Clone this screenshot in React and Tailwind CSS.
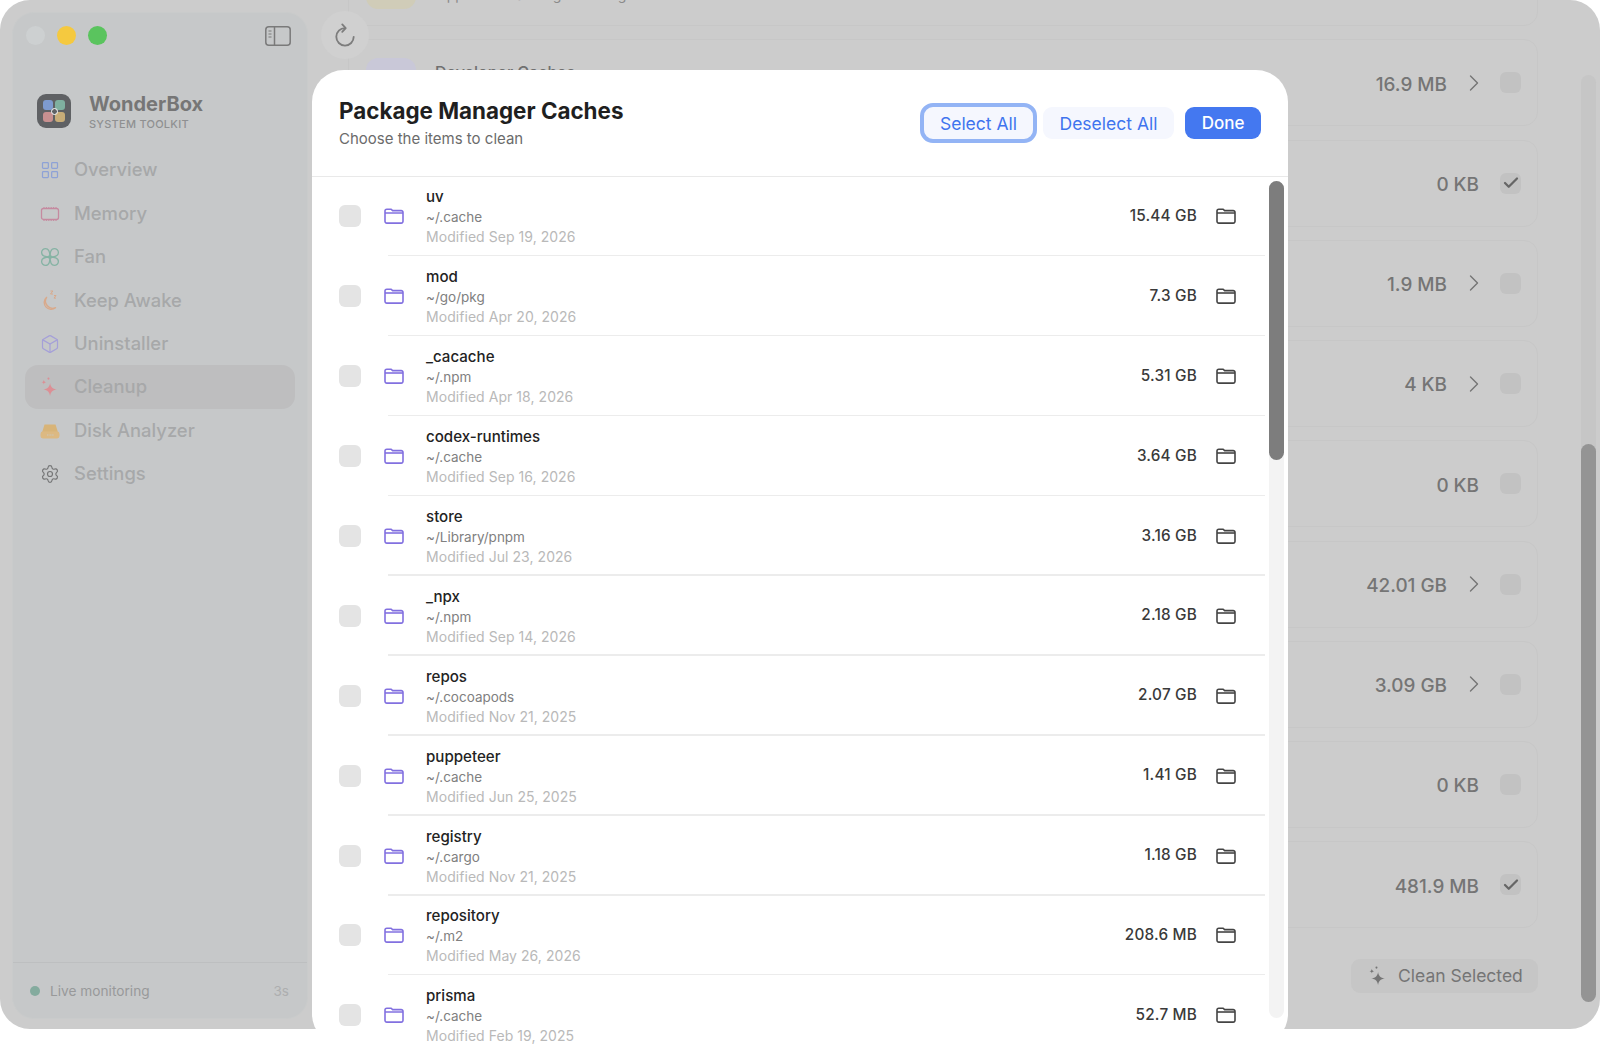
import React from 'react';
import { LayoutGrid, Box, Settings, ChevronRight, Check } from 'lucide-react';

const items = [
  { name: 'uv', path: '~/.cache', date: 'Sep 19, 2026', size: '15.44 GB' },
  { name: 'mod', path: '~/go/pkg', date: 'Apr 20, 2026', size: '7.3 GB' },
  { name: '_cacache', path: '~/.npm', date: 'Apr 18, 2026', size: '5.31 GB' },
  { name: 'codex-runtimes', path: '~/.cache', date: 'Sep 16, 2026', size: '3.64 GB' },
  { name: 'store', path: '~/Library/pnpm', date: 'Jul 23, 2026', size: '3.16 GB' },
  { name: '_npx', path: '~/.npm', date: 'Sep 14, 2026', size: '2.18 GB' },
  { name: 'repos', path: '~/.cocoapods', date: 'Nov 21, 2025', size: '2.07 GB' },
  { name: 'puppeteer', path: '~/.cache', date: 'Jun 25, 2025', size: '1.41 GB' },
  { name: 'registry', path: '~/.cargo', date: 'Nov 21, 2025', size: '1.18 GB' },
  { name: 'repository', path: '~/.m2', date: 'May 26, 2026', size: '208.6 MB' },
  { name: 'prisma', path: '~/.cache', date: 'Feb 19, 2025', size: '52.7 MB' },
];

const cards = [
  { value: '16.9 MB', more: true, title: 'Developer Caches', tile: 'bg-[#c9c8d8]' },
  { value: '0 KB', checked: true },
  { value: '1.9 MB', more: true },
  { value: '4 KB', more: true },
  { value: '0 KB' },
  { value: '42.01 GB', more: true },
  { value: '3.09 GB', more: true },
  { value: '0 KB' },
  { value: '481.9 MB', checked: true },
];

const FolderIcon = ({ className }) => (
  <svg viewBox="0 0 20 16" fill="none" stroke="currentColor" strokeWidth="1.6" strokeLinejoin="round" className={className}>
    <path d="M1 3a1.8 1.8 0 0 1 1.8-1.8h4.4L8.6 2.6h8.6A1.8 1.8 0 0 1 19 4.4v8.9a1.8 1.8 0 0 1-1.8 1.8H2.8A1.8 1.8 0 0 1 1 13.3Z" />
    <path d="M1 5h18" />
  </svg>
);

const MemoryIcon = () => (
  <svg viewBox="0 0 20 20" fill="none" stroke="#c58aa0" strokeWidth="1.3" className="w-5 h-5">
    <rect x="1.5" y="4.5" width="17" height="11" rx="2" />
    <path d="M4 3v1.5M6.4 3v1.5M8.8 3v1.5M11.2 3v1.5M13.6 3v1.5M16 3v1.5M4 15.5V17M6.4 15.5V17M8.8 15.5V17M11.2 15.5V17M13.6 15.5V17M16 15.5V17" strokeWidth="1" />
  </svg>
);

const petal = 'M10 10C6 10 1.6 9.4 1.6 5.6A4 4 0 0 1 5.6 1.6C9.4 1.6 10 6 10 10Z';

const FanIcon = () => (
  <svg viewBox="0 0 20 20" fill="none" stroke="#86b3a4" strokeWidth="1.3" className="w-5 h-5">
    <path d={petal} />
    <path d={petal} transform="rotate(90 10 10)" />
    <path d={petal} transform="rotate(180 10 10)" />
    <path d={petal} transform="rotate(270 10 10)" />
    <circle cx="10" cy="10" r="1.4" />
  </svg>
);

const MoonIcon = () => (
  <svg viewBox="0 0 20 20" fill="none" stroke="#d9a98a" strokeWidth="1.3" strokeLinejoin="round" className="w-5 h-5">
    <path d="M15.5 16.2A7.2 7.2 0 0 1 6.6 5.8 6.6 6.6 0 0 0 15.5 16.2Z" transform="translate(0 1.5)" />
    <path d="M10.5 1h2.4l-2.4 3h2.4M14 5.5h2l-2 2.6h2" strokeWidth="1" />
  </svg>
);

const SparkIcon = ({ className, fill }) => (
  <svg viewBox="3 1.5 15 17" fill={fill} className={className}>
    <path d="M11 6.5C11.5 10 13 11.6 17 12.2 13 12.8 11.5 14.4 11 18 10.5 14.4 9 12.8 5 12.2 9 11.6 10.5 10 11 6.5Z" />
    <path d="M5.5 3.6C5.7 5 6.2 5.5 7.6 5.7 6.2 5.9 5.7 6.4 5.5 7.8 5.3 6.4 4.8 5.9 3.4 5.7 4.8 5.5 5.3 5 5.5 3.6Z" />
    <circle cx="9.6" cy="2.6" r="0.9" />
  </svg>
);

const DiskIcon = () => (
  <svg viewBox="0 0 20 20" className="w-5 h-5">
    <path d="M4.5 3.5h11l2.5 8H2Z" fill="#d8b478" />
    <rect x="0.5" y="10.5" width="19" height="7" rx="2.4" fill="#dcb982" />
    <path d="M7 14h7" stroke="#c9c7c0" strokeWidth="1.2" strokeDasharray="1 0.6" />
  </svg>
);

const nav = [
  { label: 'Overview', icon: <LayoutGrid className="w-5 h-5 text-[#8ea2d6]" strokeWidth={1.5} /> },
  { label: 'Memory', icon: <MemoryIcon /> },
  { label: 'Fan', icon: <FanIcon /> },
  { label: 'Keep Awake', icon: <MoonIcon /> },
  { label: 'Uninstaller', icon: <Box className="w-5 h-5 text-[#a5a0d8]" strokeWidth={1.5} /> },
  { label: 'Cleanup', active: true, icon: <SparkIcon className="w-[17px] h-[20px] ml-[1px]" fill="#dc8f95" /> },
  { label: 'Disk Analyzer', icon: <DiskIcon /> },
  { label: 'Settings', icon: <Settings className="w-5 h-5 text-[#757677]" strokeWidth={1.4} /> },
];

const Sidebar = () => (
  <aside className="w-[296px] mt-[12px] ml-[12px] mb-[10px] shrink-0 rounded-[22px] bg-[#c6c8c9] border border-[#c9cbcb] flex flex-col">
    <div className="h-[46px] pt-[13px] pl-[13px] pr-[16px] flex items-start justify-between">
      <div className="flex gap-[12px]">
        <span className="w-[19px] h-[19px] rounded-full bg-[#cdd0d1]" />
        <span className="w-[19px] h-[19px] rounded-full bg-[#f5c93f]" />
        <span className="w-[19px] h-[19px] rounded-full bg-[#5ac45e]" />
      </div>
      <svg viewBox="0 0 26 20" fill="none" stroke="#7a7a7a" strokeWidth="1.5" className="w-[26px] h-[20px]">
        <rect x="0.8" y="0.8" width="24.4" height="18.4" rx="3" />
        <path d="M9.5 1v18" />
        <path d="M3.5 5h3M3.5 8h3M3.5 11h3" strokeWidth="1.2" />
      </svg>
    </div>
    <div className="flex items-center mt-[34px] ml-[24px] gap-[18px] h-[36px]">
      <div className="w-[34px] h-[34px] rounded-[9px] bg-[#5f6164] relative grid grid-cols-2 gap-[2px] p-[6px]">
        <span className="rounded-[3px] bg-[#7e9bd0]" />
        <span className="rounded-[3px] bg-[#7fb0a0]" />
        <span className="rounded-[3px] bg-[#c89090]" />
        <span className="rounded-[3px] bg-[#c8ad78]" />
        <span className="absolute left-[13.5px] top-[13.5px] w-[7px] h-[7px] rounded-full border-[1.5px] border-white bg-[#5f6164]" />
      </div>
      <div className="leading-none pt-[1px]">
        <div className="text-[20px] font-bold text-[#767676] leading-[24px]">WonderBox</div>
        <div className="text-[11px] font-medium tracking-[0.25px] text-[#8f9091] leading-[14px] mt-[1px]">SYSTEM TOOLKIT</div>
      </div>
    </div>
    <nav className="mt-[19.5px] px-[12px]">
      {nav.map((n) => (
        <div key={n.label} className={`h-[43.4px] flex items-center pl-[15px] gap-[14px] rounded-[13px] ${n.active ? 'bg-[#bebebf]' : ''}`}>
          <span className="w-5 h-5 shrink-0">{n.icon}</span>
          <span className="text-[18.4px] font-medium text-[#a7a8a9]">{n.label}</span>
        </div>
      ))}
    </nav>
    <div className="mt-auto border-t border-[#bdbfc0] h-[56px] flex items-center pl-[17px] pr-[18px]">
      <span className="w-[10px] h-[10px] rounded-full bg-[#84ab9e]" />
      <span className="ml-[10px] pt-[2px] text-[13.7px] text-[#98999a]">Live monitoring</span>
      <span className="ml-auto pt-[2px] text-[13.5px] text-[#adaeaf]">3s</span>
    </div>
  </aside>
);

const Card = ({ card, first }) => (
  <div className={`${first ? 'h-[86px]' : 'h-[87px]'} rounded-[14px] border border-[#c7c7c7] flex items-center pr-[16px] shrink-0`}>
    <span className={`ml-[17px] self-start mt-[18px] w-[50px] h-[50px] rounded-[12px] ${card.tile || ''}`} />
    {card.title && <span className="ml-[19px] self-start mt-[20px] text-[16px] font-medium text-[#707070]">{card.title}</span>}
    {card.sub && <span className="ml-[21px] self-start mt-[43px] text-[14px] text-[#8a8a8a]">{card.sub}</span>}
    <span className="ml-auto pt-[4px] text-[18.9px] font-medium text-[#757575]">{card.value}</span>
    {card.more && <ChevronRight className="w-[28px] h-[28px] ml-[13px] mr-[12px] text-[#757575]" strokeWidth={1.2} />}
    {!card.more && <span className="w-[21px]" />}
    <span className="w-[21px] h-[21px] rounded-[6px] bg-[#c2c2c2] flex items-center justify-center">
      {card.checked && <Check className="w-[18px] h-[18px] text-[#666]" strokeWidth={3} />}
    </span>
  </div>
);

const Main = () => (
  <main className="flex-1 relative overflow-hidden pl-[40px] pr-[62px]">
    <div className="flex flex-col gap-[13.25px] -mt-[60px]">
      <Card first card={{ value: '', sub: 'Application Settings and Logs', tile: 'bg-[#d0ccb8]' }} />
      {cards.map((c, i) => <Card key={i} card={c} />)}
    </div>
    <div className="flex justify-end mt-[31px]">
      <div className="w-[187px] h-[34px] rounded-[9px] bg-[#c6c6c6] flex items-center pl-[18px] gap-[12px]">
        <SparkIcon className="w-[17px] h-[20px]" fill="#757575" />
        <span className="text-[17.5px] text-[#757575]">Clean Selected</span>
      </div>
    </div>
    <div className="absolute right-[4px] top-[75px] h-[927px] w-[15px] rounded-full bg-[#c6c6c6]">
      <div className="absolute left-0 right-0 top-[369px] bottom-0 rounded-full bg-[#949494]" />
    </div>
    <div className="absolute left-[13px] top-[11px] w-[48px] h-[48px] rounded-full bg-[#d0d0d0] flex items-center justify-center">
      <svg viewBox="0 0 24 26" fill="none" stroke="#7d7d7d" strokeWidth="2" strokeLinecap="round" strokeLinejoin="round" className="w-[22px] h-[24px]">
        <path d="M12 5.5A9.5 9.5 0 1 0 21.5 15" />
        <path d="M9 1.5 12.8 5.5 9 9.5" />
      </svg>
    </div>
  </main>
);

const Row = ({ item, last }) => (
  <div className="h-[79.9px] flex items-center shrink-0 relative">
    <span className="ml-[27px] w-[22px] h-[22px] rounded-[6px] bg-[#e4e4e4] shrink-0" />
    <FolderIcon className="ml-[23px] w-[20px] h-[16px] text-[#8270e0] shrink-0" />
    <div className="ml-[22px] pt-[2px] flex flex-col">
      <span className="text-[15.1px] font-medium leading-[20px] text-[#232323]">{item.name}</span>
      <span className="text-[13.5px] leading-[20px] text-[#808080]">{item.path}</span>
      <span className="text-[14px] leading-[20px] tracking-[0.05px] text-[#b9b9b9]">Modified {item.date}</span>
    </div>
    <span className="ml-auto text-[15.3px] tracking-[0.2px] font-medium text-[#3a3a3a]">{item.size}</span>
    <FolderIcon className="ml-[19px] mr-[29px] w-[20px] h-[16px] text-[#444] shrink-0" />
    {!last && <span className="absolute left-[76px] right-0 bottom-0 h-[1.5px] bg-[#ececec]" />}
  </div>
);

const Modal = () => (
  <div className="absolute left-[312px] top-[70px] w-[976px] h-[976px] rounded-[32px] bg-white overflow-hidden flex flex-col">
    <header className="h-[106.5px] shrink-0 border-b-[1.5px] border-[#e9e9e9] flex items-start pl-[27px] pr-[27px]">
      <div className="pt-[26px]">
        <h2 className="text-[22.4px] font-bold leading-[30px] text-[#1f1f1f]">Package Manager Caches</h2>
        <p className="text-[15px] leading-[20px] mt-[3px] text-[#6b6b6b]">Choose the items to clean</p>
      </div>
      <div className="ml-auto mt-[37px] flex items-center">
        <button className="h-[32px] w-[109px] pt-[2px] rounded-[9px] bg-[#f5f7fe] text-[17.5px] text-[#3f74ee] outline-[4px] outline-[#93b4f5]">Select All</button>
        <button className="h-[32px] w-[131px] pt-[2px] ml-[10px] rounded-[9px] bg-[#f5f7fe] text-[17.5px] text-[#3f74ee]">Deselect All</button>
        <button className="h-[32px] w-[76px] pt-[2px] ml-[11px] rounded-[9px] bg-[#4478f0] text-[17px] font-medium text-white">Done</button>
      </div>
    </header>
    <div className="relative flex-1">
      <div className="w-[953px] flex flex-col">
        {items.map((item, i) => <Row key={item.name} item={item} last={i === items.length - 1} />)}
      </div>
      <div className="absolute left-[957px] top-[4px] h-[837px] w-[15px] rounded-full bg-[#f3f3f3]">
        <div className="h-[279px] rounded-full bg-[#7d7d7d]" />
      </div>
    </div>
  </div>
);

export default function App() {
  return (
    <div className="relative w-[1600px] h-[1046px] bg-white overflow-hidden font-[Inter,sans-serif]">
      <div className="h-[1029px] rounded-[30px] bg-[#cccccc] flex overflow-hidden">
        <Sidebar />
        <Main />
      </div>
      <Modal />
    </div>
  );
}
